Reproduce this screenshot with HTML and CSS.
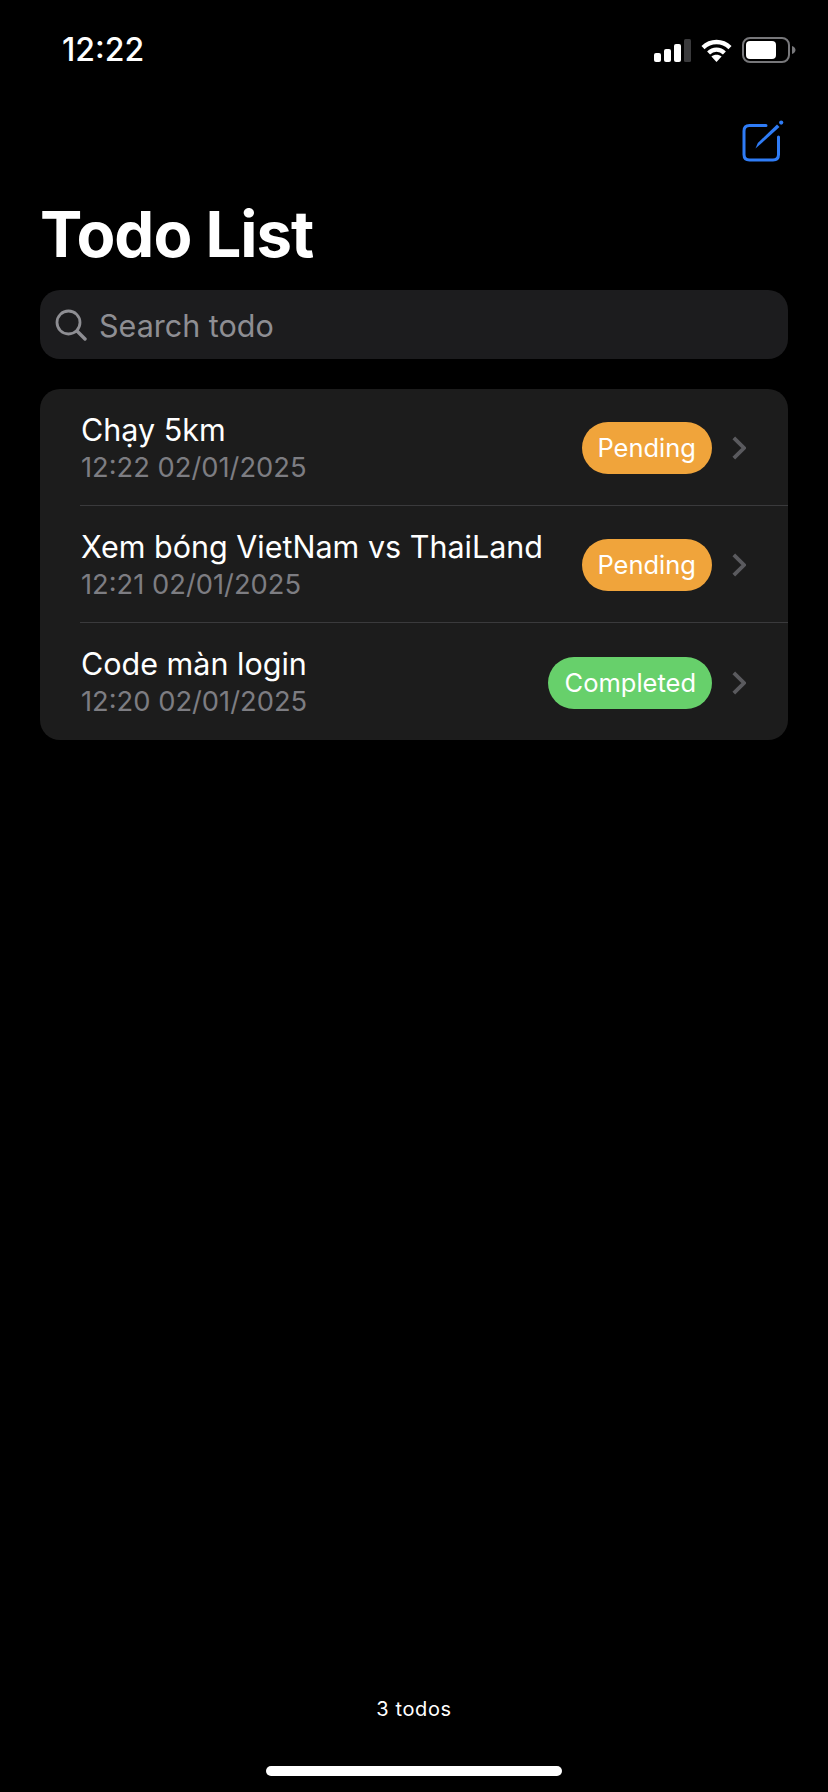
FILE: index.html
```html
<!DOCTYPE html>
<html lang="vi">
<head>
  <meta charset="UTF-8" />
  <title>Todo List</title>
  <link rel="stylesheet" href="styles.css">
</head>
<body>
  <div class="page">
    <div class="statusbar">
      <span class="clock">12:22</span>
      <div class="status-icons">
        <svg class="ic-signal" width="37" height="23" viewBox="0 0 37 23">
          <rect x="0" y="14" width="7" height="9" rx="2" fill="#fff"/>
          <rect x="10" y="10" width="7" height="13" rx="2" fill="#fff"/>
          <rect x="20" y="5" width="7" height="18" rx="2" fill="#fff"/>
          <rect x="30" y="0" width="7" height="23" rx="1.5" fill="#3a3a3c"/>
        </svg>
        <svg class="ic-wifi" width="31" height="23" viewBox="0 0 31 23">
          <path d="M2 8.6C9.6 1.2 21.4 1.2 29 8.6" fill="none" stroke="#fff" stroke-width="4.4"/>
          <path d="M7.6 14C12 9.6 19 9.6 23.4 14" fill="none" stroke="#fff" stroke-width="4.2"/>
          <path d="M15.5 23L10.4 17.6C13.2 15.2 17.8 15.2 20.6 17.6Z" fill="#fff"/>
        </svg>
        <svg class="ic-battery" width="54" height="26" viewBox="0 0 54 26">
          <rect x="1" y="1" width="46" height="24" rx="7" fill="none" stroke="#77777a" stroke-width="2"/>
          <rect x="4" y="4" width="30" height="18" rx="4" fill="#fff"/>
          <path d="M50 9C52.5 10 53.5 11.500 53.5 13C53.500 14.500 52.500 16 50 17Z" fill="#77777a"/>
        </svg>
      </div>
    </div>

    <div class="navbar">
      <svg class="ic-edit" width="42" height="42" viewBox="0 0 42 42">
        <path d="M24 5.500H7.500Q2 5.500 2 11V34.500Q2 40 7.500 40H31Q36.500 40 36.500 34.500V17" fill="none" stroke="#2f7cf6" stroke-width="3" stroke-linecap="round"/>
        <path d="M13.500 28.500L15.800 23L35 4.500L37.500 7Z" fill="#2f7cf6"/>
        <circle cx="39.200" cy="2.600" r="2.100" fill="#2f7cf6"/>
      </svg>
    </div>

    <h1 class="title">Todo List</h1>

    <div class="search">
      <svg class="ic-search" width="32" height="32" viewBox="0 0 32 32">
        <circle cx="13.500" cy="13.500" r="11.500" fill="none" stroke="#8e8e93" stroke-width="2.800"/>
        <path d="M22 22L30 30" fill="none" stroke="#8e8e93" stroke-width="3.400" stroke-linecap="round"/>
      </svg>
      <span class="search-text">Search todo</span>
    </div>

    <ul class="todo-list">
      <li class="todo-row">
        <div class="todo-info">
          <div class="todo-name">Chạy 5km</div>
          <div class="todo-date">12:22 02/01/2025</div>
        </div>
        <span class="pill pending">Pending</span>
        <svg class="chevron" width="14" height="24" viewBox="0 0 14 24">
          <path d="M1.800 1.800L12 12L1.800 22.200" fill="none" stroke="#5a5a5e" stroke-width="3.800"/>
        </svg>
      </li>
      <li class="todo-row">
        <div class="todo-info">
          <div class="todo-name">Xem bóng VietNam vs ThaiLand</div>
          <div class="todo-date">12:21 02/01/2025</div>
        </div>
        <span class="pill pending">Pending</span>
        <svg class="chevron" width="14" height="24" viewBox="0 0 14 24">
          <path d="M1.800 1.800L12 12L1.800 22.200" fill="none" stroke="#5a5a5e" stroke-width="3.800"/>
        </svg>
      </li>
      <li class="todo-row">
        <div class="todo-info">
          <div class="todo-name">Code màn login</div>
          <div class="todo-date">12:20 02/01/2025</div>
        </div>
        <span class="pill completed">Completed</span>
        <svg class="chevron" width="14" height="24" viewBox="0 0 14 24">
          <path d="M1.800 1.800L12 12L1.800 22.200" fill="none" stroke="#5a5a5e" stroke-width="3.800"/>
        </svg>
      </li>
    </ul>

    <div class="footer">3 todos</div>
    <div class="home-bar"></div>
  </div>
</body>
</html>
```

FILE: styles.css
```css
html, body {
  margin: 0;
  background: #000;
}
.page {
  height: 1792px;
  display: flex;
  flex-direction: column;
  font-family: Inter, "Noto Sans", sans-serif;
  color: #fff;
  overflow: hidden;
}
.statusbar {
  height: 100px;
  padding: 37px 32px 0 62px;
  box-sizing: border-box;
  display: flex;
  justify-content: space-between;
  align-items: flex-start;
}
.clock {
  font-size: 32px;
  line-height: 26px;
  font-weight: 500;
}
.status-icons {
  display: flex;
  align-items: center;
  gap: 10px;
  height: 26px;
}
.navbar {
  height: 42px;
  margin-top: 20px;
  padding-right: 44px;
  display: flex;
  justify-content: flex-end;
}
.title {
  margin: 34px 0 0 40px;
  font-size: 63.5px;
  line-height: 76px;
  font-weight: 700;
  letter-spacing: -1px;
}
.search {
  height: 69px;
  margin: 18px 40px 0;
  padding-left: 15px;
  background: #1c1c1e;
  border-radius: 20px;
  display: flex;
  align-items: center;
  gap: 12px;
}
.search-text {
  padding-top: 2px;
  font-size: 30.5px;
  color: #8e8e93;
}
.todo-list {
  list-style: none;
  margin: 30px 40px 0;
  padding: 0 0 0 40px;
  background: #1c1c1c;
  border-radius: 20px;
}
.todo-row {
  height: 114px;
  padding: 2px 42px 0 0;
  display: flex;
  align-items: center;
  border-bottom: 1px solid #3a3a3c;
}
.todo-row:last-child {
  height: 115px;
  border-bottom: none;
}
.todo-info {
  flex: 1;
  padding: 1px 0 0 1px;
}
.todo-name {
  font-size: 30.5px;
  line-height: 37px;
}
.todo-date {
  margin-top: 1px;
  font-size: 27.3px;
  line-height: 38px;
  color: #7d7d82;
}
.pill {
  height: 52px;
  padding: 0 16px 0 15px;
  border-radius: 26px;
  font-size: 25.5px;
  line-height: 52px;
  color: #fff;
}
.pending {
  background: #f0a43b;
}
.completed {
  padding-left: 17px;
  background: #67d06b;
}
.chevron {
  margin-left: 20px;
}
.footer {
  margin-top: auto;
  text-align: center;
  font-size: 20px;
  line-height: 26px;
  letter-spacing: 0.6px;
}
.home-bar {
  width: 296px;
  height: 10px;
  margin: 44px auto 16px;
  background: #fff;
  border-radius: 5px;
}
```
